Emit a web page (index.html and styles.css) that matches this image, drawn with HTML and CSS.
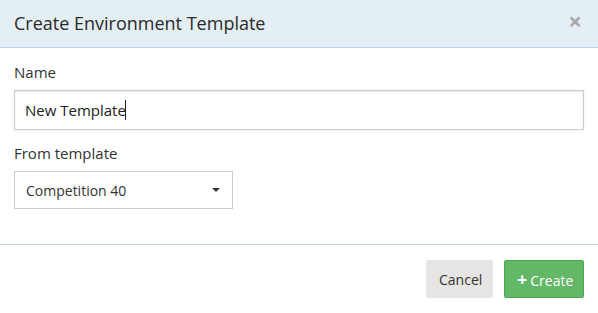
FILE: index.html
```html
<!DOCTYPE html>
<html lang="en">
<head>
    <meta charset="UTF-8">
    <title>Create Environment Template</title>
    <link rel="stylesheet" href="styles.css">
</head>
<body>
<div class="modal">
    <div class="modal-header">
        <h4>Create Environment Template</h4>
        <span class="close">&times;</span>
    </div>
    <div class="modal-body">
        <label>Name</label>
        <div class="input">New Template<span class="cursor"></span></div>
        <label>From template</label>
        <div class="select">
            <span>Competition 40</span>
            <span class="caret"></span>
        </div>
    </div>
    <div class="modal-footer">
        <button class="btn btn-default">Cancel</button>
        <button class="btn btn-success"><span class="plus">+</span>Create</button>
    </div>
</div>
</body>
</html>
```

FILE: styles.css
```css
* {
    margin: 0;
    padding: 0;
    box-sizing: border-box;
}

body {
    font-family: "Open Sans", sans-serif;
    color: #333;
    background: #fff;
    width: 598px;
    height: 313px;
    overflow: hidden;
}

.modal-header {
    display: flex;
    align-items: center;
    justify-content: space-between;
    height: 48px;
    padding: 0 14px;
    background: #e4eef5;
    border-bottom: 1px solid #bcd3e4;
}

.modal-header h4 {
    font-size: 18px;
    font-weight: 400;
    color: #2a2a2a;
    margin-top: -1px;
}

.close {
    font-size: 24px;
    font-weight: 700;
    color: #a8a8a8;
    line-height: 1;
    margin-top: -5px;
    margin-right: 2px;
}

.modal-body {
    padding: 14px 14px 0;
    height: 196px;
}

label {
    display: block;
    font-size: 15px;
    height: 20px;
    line-height: 20px;
    margin-bottom: 8px;
}

.input {
    display: flex;
    align-items: center;
    height: 40px;
    width: 570px;
    padding: 0 10px;
    border: 1px solid #ccc;
    box-shadow: inset 0 1px 2px rgba(0, 0, 0, 0.1), 0 0 3px rgba(0, 0, 0, 0.08);
    font-size: 15px;
    color: #222;
    margin-bottom: 13px;
}

.cursor {
    display: inline-block;
    width: 1px;
    height: 20px;
    background: #222;
    margin-left: -1px;
}

.select {
    display: flex;
    align-items: center;
    justify-content: space-between;
    width: 219px;
    height: 38px;
    padding: 0 12px 0 11px;
    border: 1px solid #ccc;
    font-size: 14px;
    color: #333;
}

.caret {
    width: 0;
    height: 0;
    border-left: 4px solid transparent;
    border-right: 4px solid transparent;
    border-top: 4px solid #333;
}

.modal-footer {
    display: flex;
    justify-content: flex-end;
    gap: 11px;
    padding: 15px 14px;
    border-top: 1px solid #bcd3e4;
}

.btn {
    font-family: "Open Sans", sans-serif;
    font-size: 14px;
    height: 38px;
    padding: 0 12px;
    border-radius: 2px;
    cursor: pointer;
}

.btn-default {
    width: 67px;
    background: #e6e5e3;
    border: 1px solid #e6e5e3;
    color: #333;
}

.btn-success {
    width: 80px;
    background: #63b867;
    border: 1px solid #4fa454;
    color: #fff;
}

.plus {
    font-weight: 700;
    font-size: 18px;
    margin-right: 3px;
}
```
